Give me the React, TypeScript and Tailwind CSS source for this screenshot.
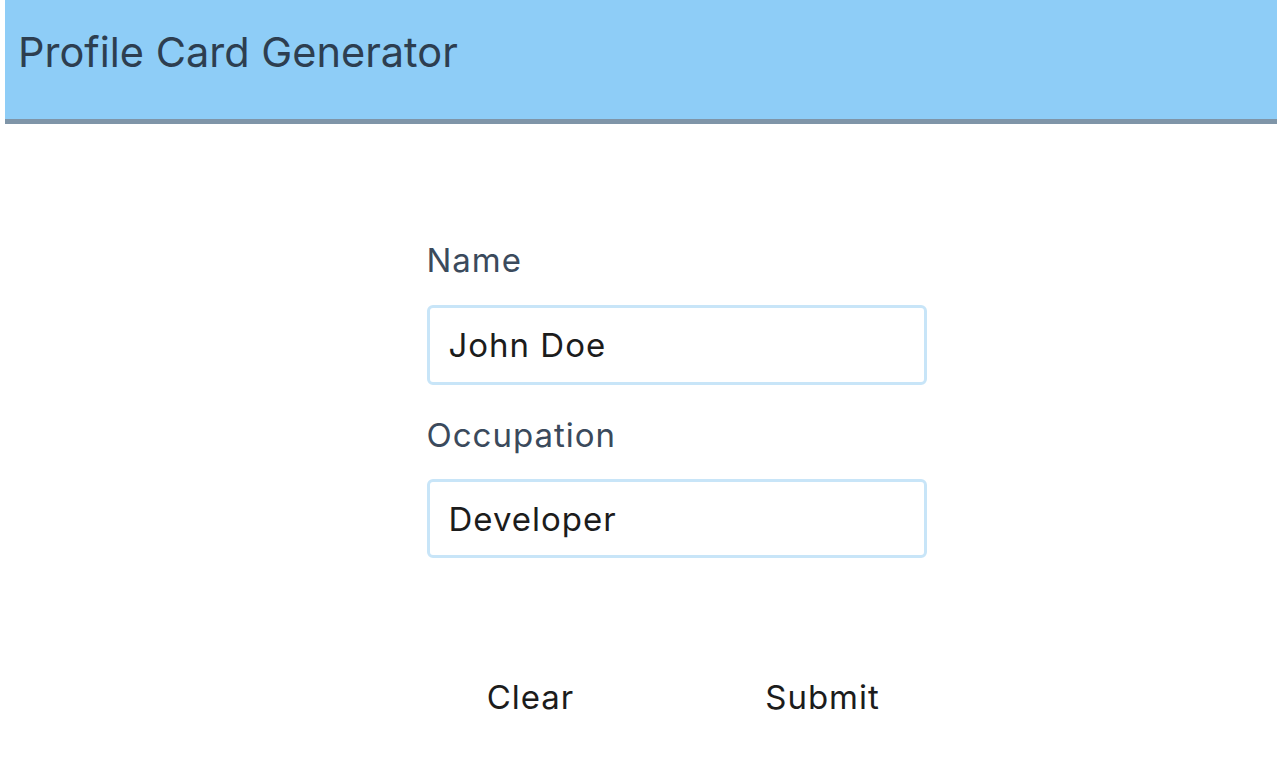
export default function App() {
  return (
    <div className="min-h-screen bg-white" style={{ fontFamily: "Inter, 'Liberation Sans', sans-serif" }}>
      <header className="ml-[5px] h-[124px] bg-[#8ecdf7] border-b-[5px] border-[#7f95a8] flex items-start pl-[13px] pt-[27px]">
        <h1 className="text-[41.5px] leading-[50px] text-[#2d3e50] font-normal">Profile Card Generator</h1>
      </header>

      <main className="flex justify-center pl-[76px] pt-[114px]">
        <form className="w-[500px] flex flex-col">
          <label className="text-[33px] tracking-[0.03em] leading-[44px] text-[#3b4a5c]">Name</label>
          <input
            defaultValue="John Doe"
            className="mt-[23px] h-[80px] rounded-[6px] border-[3px] border-[#c8e5f8] px-[19px] text-[33px] tracking-[0.03em] text-[#1c1c1c] outline-none"
          />
          <label className="mt-[28px] text-[33px] tracking-[0.03em] leading-[44px] text-[#3b4a5c]">Occupation</label>
          <input
            defaultValue="Developer"
            className="mt-[22px] h-[79px] rounded-[6px] border-[3px] border-[#c8e5f8] px-[19px] text-[33px] tracking-[0.03em] text-[#1c1c1c] outline-none"
          />
          <div className="mt-[117px] flex justify-center gap-[142px]">
            <button type="button" className="w-[150px] text-[33px] tracking-[0.03em] leading-[44px] text-[#1c1c1c]">Clear</button>
            <button type="button" className="w-[150px] text-[33px] tracking-[0.03em] leading-[44px] text-[#1c1c1c]">Submit</button>
          </div>
        </form>
      </main>
    </div>
  );
}
